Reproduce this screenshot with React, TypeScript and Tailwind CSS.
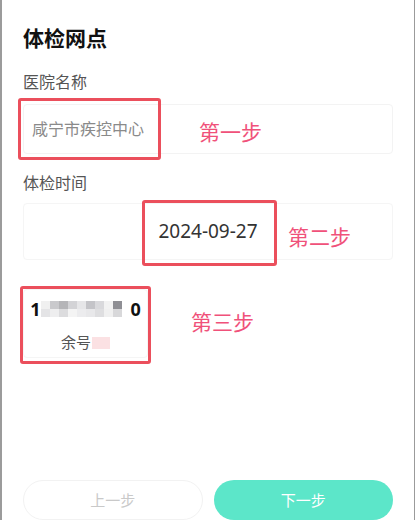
import React from 'react';

const mosaicTop = ['#f0f0f0', '#c9c9cc', '#b5b5b8', '#d3d3d6', '#e6e6e8', '#c4c4c8', '#d9d9dc', '#f2f2f2', '#8f8f94', '#ffffff'];
const mosaicBottom = ['#e4e4e6', '#eeeeef', '#dcdcde', '#f4f4f4', '#ececee', '#e8e8ea', '#dedee0', '#f0f0f0', '#d8d8da', '#ffffff'];

function Annotation({ className }: { className: string }) {
  return <div className={`pointer-events-none absolute rounded-[3px] border-[3px] border-[#eb4f5c] ${className}`} />;
}

function StepLabel({ text, className }: { text: string; className: string }) {
  return (
    <span className={`absolute whitespace-nowrap text-[21px] leading-[21px] text-[#f0517a] ${className}`}>{text}</span>
  );
}

export default function App() {
  return (
    <div
      className="h-[520px] w-[416px] overflow-hidden bg-white"
      style={{ fontFamily: '"Noto Sans", "Noto Sans CJK SC", sans-serif' }}
    >
      <div className="flex h-full w-[415px] flex-col border-l-2 border-r border-[#9b9b9b] px-[21px]">
        {/* Title */}
        <h1 className="mt-[27px] text-[21px] font-bold leading-[22px] text-[#111]">体检网点</h1>

        {/* Hospital */}
        <div className="mt-[25px] text-[16px] leading-[16px] text-[#555]">医院名称</div>
        <div className="relative mt-[14px] flex h-[52px] items-center rounded-[4px] border border-[#f3f3f3] px-[8px]">
          <span className="text-[16px] text-[#8a8a8a]">咸宁市疾控中心</span>
          <Annotation className="-left-[6px] -top-[7px] h-[62px] w-[143px]" />
          <StepLabel text="第一步" className="left-[175px] top-[17px]" />
        </div>

        {/* Date */}
        <div className="mt-[21px] text-[16px] leading-[16px] text-[#555]">体检时间</div>
        <div className="relative mt-[12px] flex h-[60px] items-center justify-center rounded-[4px] border border-[#f5f5f5]">
          <span className="text-[19px] text-[#333]">2024-09-27</span>
          <Annotation className="left-[118px] -top-[4px] h-[66px] w-[135px]" />
          <StepLabel text="第二步" className="left-[264px] top-[23px]" />
        </div>

        {/* Number card */}
        <div className="relative mt-[29px] flex h-[72px] w-[125px] flex-col items-center rounded-[4px] border border-[#f5f5f5]">
          <div className="mt-[9px] flex h-[20px] items-center text-[18px] font-bold leading-[20px] text-[#111]">
            <span>1</span>
            <div className="flex flex-col">
              <div className="flex">
                {mosaicTop.map((c, i) => (
                  <div key={i} className="h-[8px] w-[9px]" style={{ backgroundColor: c }} />
                ))}
              </div>
              <div className="flex">
                {mosaicBottom.map((c, i) => (
                  <div key={i} className="h-[8px] w-[9px]" style={{ backgroundColor: c }} />
                ))}
              </div>
            </div>
            <span>0</span>
          </div>
          <div className="mt-[16px] flex items-center text-[15px] leading-[15px] text-[#555]">
            <span>余号</span>
            <span className="ml-[1px] h-[12px] w-[18px] bg-[#fbe1e3]" />
          </div>
          <Annotation className="-left-[4px] -top-[4px] h-[78px] w-[131px]" />
          <StepLabel text="第三步" className="left-[167px] top-[22px]" />
        </div>

        {/* Buttons */}
        <div className="mt-[122px] flex gap-[11px]">
          <button className="h-[40px] w-[180px] rounded-full border border-[#f2f2f2] text-[15px] text-[#c9c9c9]">
            上一步
          </button>
          <button className="h-[40px] w-[180px] rounded-full bg-[#5ce6c9] text-[15px] text-white">
            下一步
          </button>
        </div>
      </div>
    </div>
  );
}
